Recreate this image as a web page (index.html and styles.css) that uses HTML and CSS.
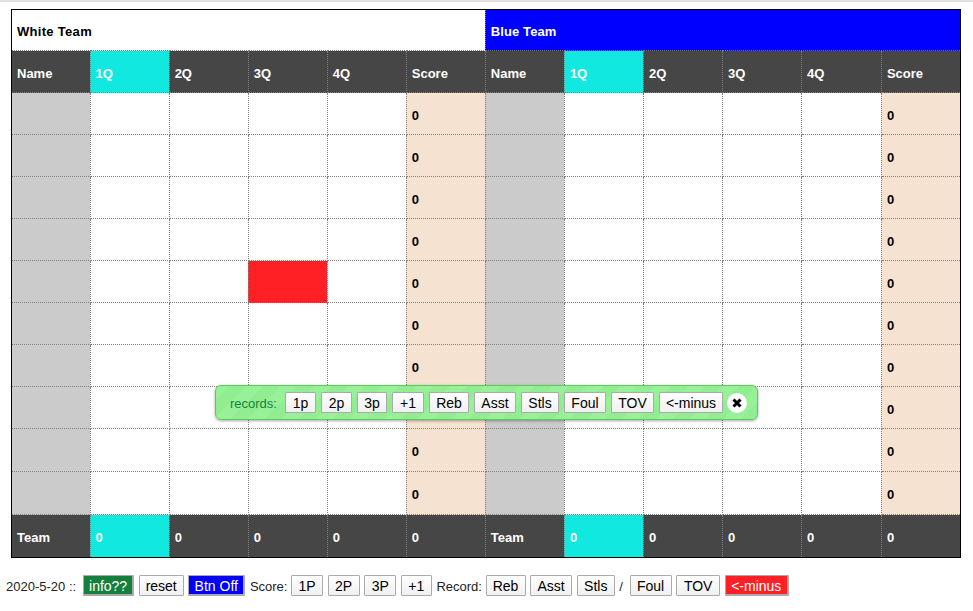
FILE: index.html
```html
<!DOCTYPE html>
<html lang="en">
<head>
<meta charset="utf-8">
<title>Scoreboard</title>
<link rel="stylesheet" href="styles.css">
</head>
<body>
<table class="board">
<colgroup>
<col class="c-first"><col class="c79"><col class="c79"><col class="c79"><col class="c79"><col class="c79">
<col class="c79"><col class="c79"><col class="c79"><col class="c79"><col class="c-wide"><col class="c79">
</colgroup>
<tr class="teams"><td colspan="6" class="white-team">White Team</td><td colspan="6" class="blue-team">Blue Team</td></tr>
<tr class="head"><td>Name</td><td class="q1">1Q</td><td>2Q</td><td>3Q</td><td>4Q</td><td>Score</td><td>Name</td><td class="q1">1Q</td><td>2Q</td><td>3Q</td><td>4Q</td><td>Score</td></tr>
<tr class="row"><td class="name"></td><td></td><td></td><td></td><td></td><td class="score">0</td><td class="name"></td><td></td><td></td><td></td><td></td><td class="score">0</td></tr>
<tr class="row"><td class="name"></td><td></td><td></td><td></td><td></td><td class="score">0</td><td class="name"></td><td></td><td></td><td></td><td></td><td class="score">0</td></tr>
<tr class="row"><td class="name"></td><td></td><td></td><td></td><td></td><td class="score">0</td><td class="name"></td><td></td><td></td><td></td><td></td><td class="score">0</td></tr>
<tr class="row"><td class="name"></td><td></td><td></td><td></td><td></td><td class="score">0</td><td class="name"></td><td></td><td></td><td></td><td></td><td class="score">0</td></tr>
<tr class="row"><td class="name"></td><td></td><td></td><td class="active"></td><td></td><td class="score">0</td><td class="name"></td><td></td><td></td><td></td><td></td><td class="score">0</td></tr>
<tr class="row"><td class="name"></td><td></td><td></td><td></td><td></td><td class="score">0</td><td class="name"></td><td></td><td></td><td></td><td></td><td class="score">0</td></tr>
<tr class="row"><td class="name"></td><td></td><td></td><td></td><td></td><td class="score">0</td><td class="name"></td><td></td><td></td><td></td><td></td><td class="score">0</td></tr>
<tr class="row"><td class="name"></td><td></td><td></td><td></td><td></td><td class="score">0</td><td class="name"></td><td></td><td></td><td></td><td></td><td class="score">0</td></tr>
<tr class="row tall"><td class="name"></td><td></td><td></td><td></td><td></td><td class="score">0</td><td class="name"></td><td></td><td></td><td></td><td></td><td class="score">0</td></tr>
<tr class="row tall"><td class="name"></td><td></td><td></td><td></td><td></td><td class="score">0</td><td class="name"></td><td></td><td></td><td></td><td></td><td class="score">0</td></tr>
<tr class="head foot"><td>Team</td><td class="q1">0</td><td>0</td><td>0</td><td>0</td><td>0</td><td>Team</td><td class="q1">0</td><td>0</td><td>0</td><td>0</td><td>0</td></tr>
</table>

<div class="toolbar">
<span class="date">2020-5-20 ::</span>
<button class="btn btn-info w51">info??</button>
<button class="btn w45">reset</button>
<button class="btn btn-off w57">Btn Off</button>
<span class="label">Score:</span>
<button class="btn w32">1P</button>
<button class="btn w32">2P</button>
<button class="btn w32">3P</button>
<button class="btn w31">+1</button>
<span class="label">Record:</span>
<button class="btn w40">Reb</button>
<button class="btn w42">Asst</button>
<button class="btn w38">Stls</button>
<span class="label slash">/</span>
<button class="btn w42">Foul</button>
<button class="btn w44">TOV</button>
<button class="btn btn-minus w64">&lt;-minus</button>
</div>

<div class="popup">
<span class="popup-label">records:</span>
<button class="btn w31">1p</button>
<button class="btn w31">2p</button>
<button class="btn w30">3p</button>
<button class="btn w32">+1</button>
<button class="btn w40">Reb</button>
<button class="btn w42">Asst</button>
<button class="btn w38">Stls</button>
<button class="btn w42">Foul</button>
<button class="btn w43">TOV</button>
<button class="btn w64">&lt;-minus</button>
<span class="close"><svg width="10" height="10" viewBox="0 0 10 10"><path d="M1.5 1.5L8.5 8.5M8.5 1.5L1.5 8.5" stroke="#000" stroke-width="3" fill="none"/></svg></span>
</div>
</body>
</html>
```
FILE: styles.css
```css
html, body { margin: 0; padding: 0; }
body {
  border-top: 2px solid #e0e0e0;
  font-family: "Liberation Sans", Arial, sans-serif;
  font-size: 13px;
  background: #fff;
  color: #000;
  height: 609px;
  overflow: hidden;
  position: relative;
}
.board {
  border-collapse: collapse;
  table-layout: fixed;
  width: 950px;
  margin: 7px 0 0 11px;
  border: 1px solid #000;
  font-weight: bold;
  font-size: 13px;
}
.c-first { width: 78.6px; }
.c79 { width: 79.05px; }
.c-wide { width: 79.9px; }
.board td {
  border: 1px dotted #808080;
  padding: 0 0 0 5px;
  height: 41px;
  box-sizing: border-box;
}
.board tr > td:first-child { border-left: 1px solid #000; }
.board tr > td:last-child { border-right: 1px solid #000; }
.board tr:first-child > td { border-top: 1px solid #000; }
.board tr:last-child > td { border-bottom: 1px solid #000; }
.board .teams td { height: 41px; padding-top: 2px; }
.board .white-team { background: #fff; color: #000; letter-spacing: .3px; }
.board .blue-team { background: #0000ff; color: #fff; letter-spacing: .1px; }
.board .head td { background: #464646; color: #fff; height: 42px; padding-top: 4px; }
.board .head td.q1 { background: #10e8e0; }
.board .row td { height: 42px; padding-top: 3px; }
.board .row.tall td { height: 43px; }
.board .foot td { height: 43px; padding-top: 2px; }
.board .row .name { background: #cbcbcb; }
.board .row .score { background: #f5e2d0; }
.board .row .active { background: #ff2026; }
.toolbar {
  display: flex;
  align-items: center;
  gap: 4.6px;
  margin: 17px 0 0 6px;
  font-size: 13px;
  color: #222;
}
.toolbar .btn { padding-top: 1px; }
.date { margin-right: 2.4px; padding-top: 1px; }
.label { margin-right: -1px; padding-top: 1px; }
.slash { margin-right: 2px; }
.btn {
  flex: none;
  font-family: "Liberation Sans", Arial, sans-serif;
  font-size: 14px;
  height: 21px;
  padding: 0;
  margin: 0;
  white-space: nowrap;
  border: 1px solid #aaa;
  border-radius: 1px;
  background: linear-gradient(#fff, #f0f0f0);
  color: #000;
}
.w30 { width: 30px; }
.w31 { width: 31px; }
.w32 { width: 32px; }
.w38 { width: 38px; }
.w40 { width: 40px; }
.w42 { width: 42px; }
.w43 { width: 43px; }
.w44 { width: 44px; }
.w45 { width: 45px; }
.w51 { width: 51px; }
.w57 { width: 57px; }
.w64 { width: 64px; }
.btn-info { background: #15803d; color: #fff; border-width: 1px 2px 2px 1px; }
.btn-off { background: #0000ff; color: #fff; border-width: 1px 2px 2px 1px; }
.btn-minus { background: #ff2026; color: #fff; border-width: 1px 2px 2px 1px; }
.popup {
  position: absolute;
  left: 215px;
  top: 383px;
  width: 543px;
  height: 35px;
  box-sizing: border-box;
  display: flex;
  align-items: center;
  gap: 5px;
  padding: 0 0 0 14px;
  border: 1px solid #5ccb5c;
  border-radius: 6px;
  box-shadow: 0 1px 3px rgba(0,0,0,.35);
  background: repeating-linear-gradient(-45deg, #90ee90 0 12px, #98f098 12px 24px);
}
.popup-label { color: #15803d; margin: 1px 3px 0 0; }
.close {
  flex: none;
  width: 20px;
  height: 20px;
  margin-left: -1px;
  border-radius: 50%;
  background: #fff;
  display: flex;
  align-items: center;
  justify-content: center;
}
```
